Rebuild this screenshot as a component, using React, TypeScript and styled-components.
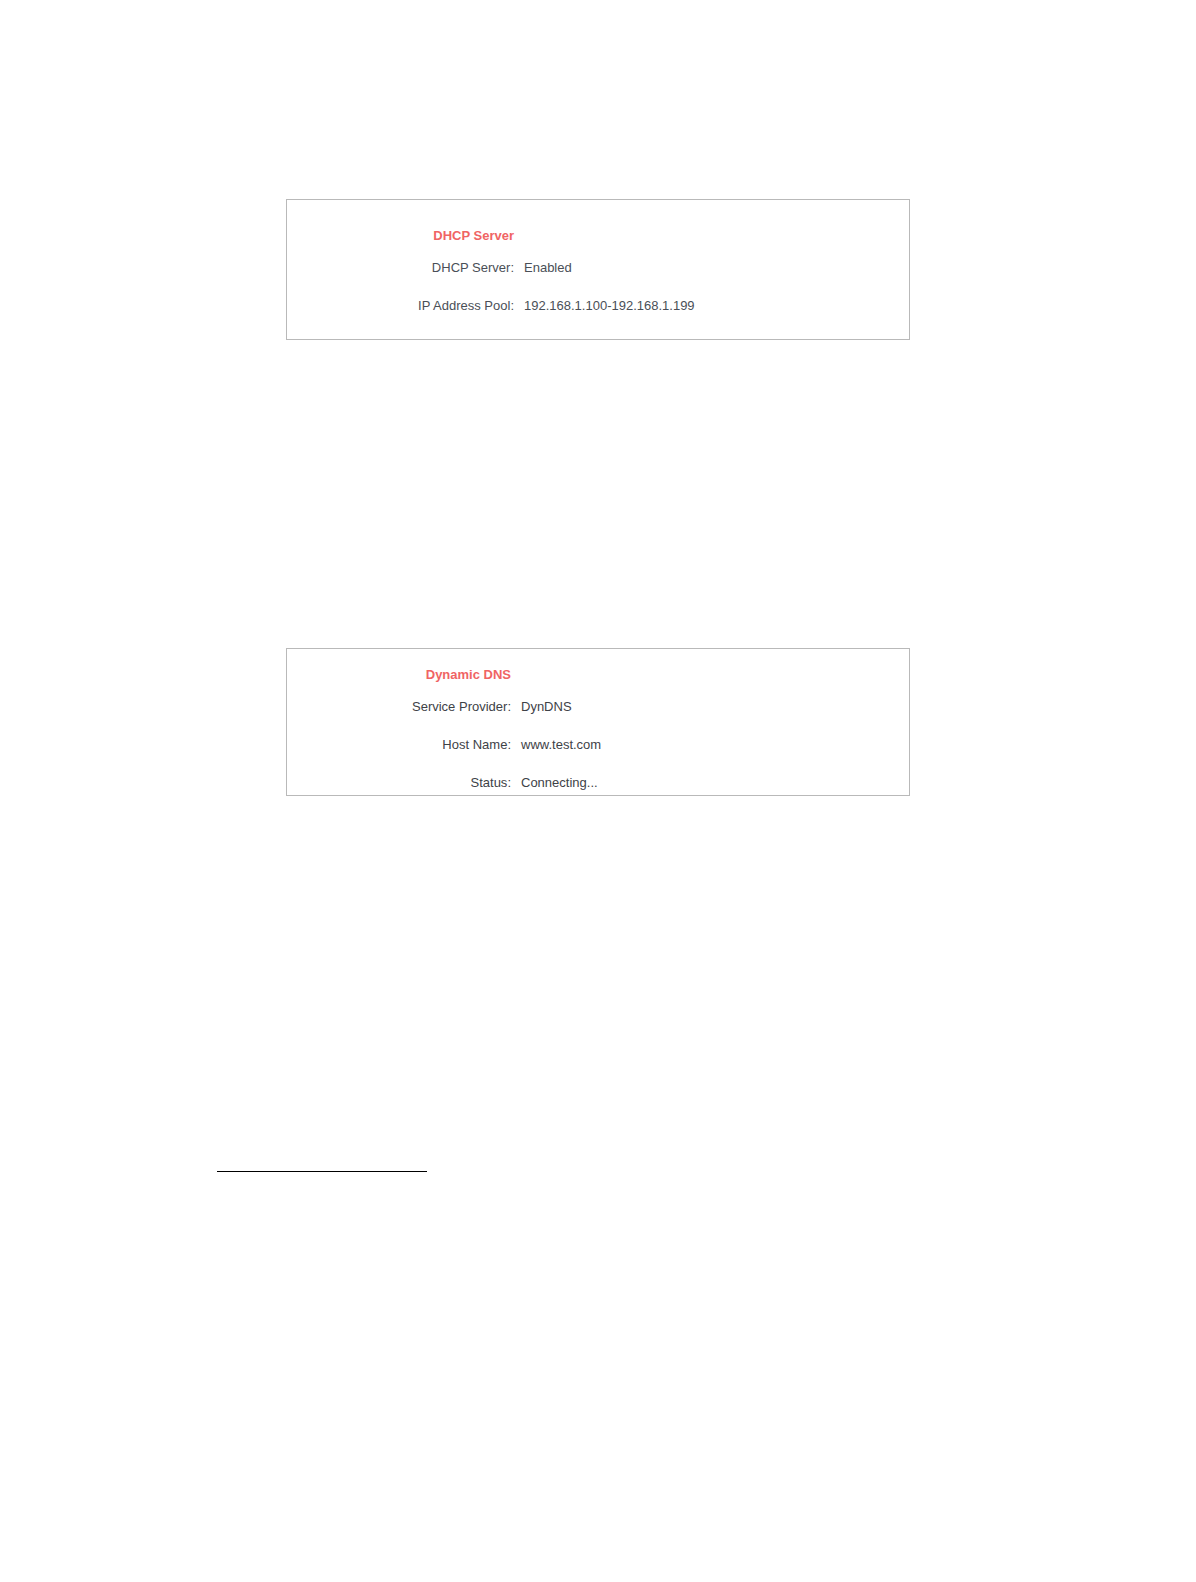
import React from "react";
import styled, { createGlobalStyle } from "styled-components";

const GlobalStyle = createGlobalStyle`
  body {
    margin: 0;
    background: #ffffff;
    font-family: "Liberation Sans", Arial, sans-serif;
  }
`;

const Page = styled.main`
  display: flex;
  flex-direction: column;
  box-sizing: border-box;
  min-height: 100vh;
  padding: 199px 24px 64px;
`;

const Panels = styled.div`
  display: flex;
  flex-direction: column;
  gap: 308px;
  width: 100%;
  max-width: 624px;
  margin: 0 auto;
`;

const Panel = styled.section<{ $label: number; $top: number; $bottom: number; $ink: string }>`
  display: grid;
  grid-template-columns: minmax(0, ${(p) => p.$label}px) minmax(0, 1fr);
  gap: 16px 10px;
  padding: ${(p) => p.$top}px 0 ${(p) => p.$bottom}px;
  border: 1px solid #b9b9b9;
  font-size: 13px;
  line-height: 16px;
  color: ${(p) => p.$ink};
`;

const Title = styled.h2`
  grid-column: 1;
  margin: 0;
  font-size: 13px;
  line-height: 16px;
  font-weight: 700;
  text-align: right;
  color: #f06464;
`;

const Fields = styled.dl`
  grid-column: 1 / -1;
  display: grid;
  grid-template-columns: subgrid;
  row-gap: 22px;
  margin: 0;
`;

const Label = styled.dt`
  text-align: right;
`;

const Value = styled.dd`
  margin: 0;
`;

const Rule = styled.hr`
  width: 210px;
  height: 1px;
  margin: 375px 0 0;
  margin-left: calc(50% - 381px);
  border: 0;
  background: #000000;
`;

type Field = [label: string, value: string];

interface StatusPanelProps {
  title: string;
  fields: Field[];
  label: number;
  top: number;
  bottom: number;
  ink: string;
}

function StatusPanel({ title, fields, label, top, bottom, ink }: StatusPanelProps) {
  return (
    <Panel $label={label} $top={top} $bottom={bottom} $ink={ink}>
      <Title>{title}</Title>
      <Fields>
        {fields.map(([name, value]) => (
          <React.Fragment key={name}>
            <Label>{name}:</Label>
            <Value>{value}</Value>
          </React.Fragment>
        ))}
      </Fields>
    </Panel>
  );
}

const dhcp: Field[] = [
  ["DHCP Server", "Enabled"],
  ["IP Address Pool", "192.168.1.100-192.168.1.199"],
];

const dns: Field[] = [
  ["Service Provider", "DynDNS"],
  ["Host Name", "www.test.com"],
  ["Status", "Connecting..."],
];

export default function App() {
  return (
    <>
      <GlobalStyle />
      <Page>
        <Panels>
          <StatusPanel title="DHCP Server" fields={dhcp} label={227} top={28} bottom={25} ink="#4a4f57" />
          <StatusPanel title="Dynamic DNS" fields={dns} label={224} top={18} bottom={4} ink="#3e4247" />
        </Panels>
        <Rule />
      </Page>
    </>
  );
}
